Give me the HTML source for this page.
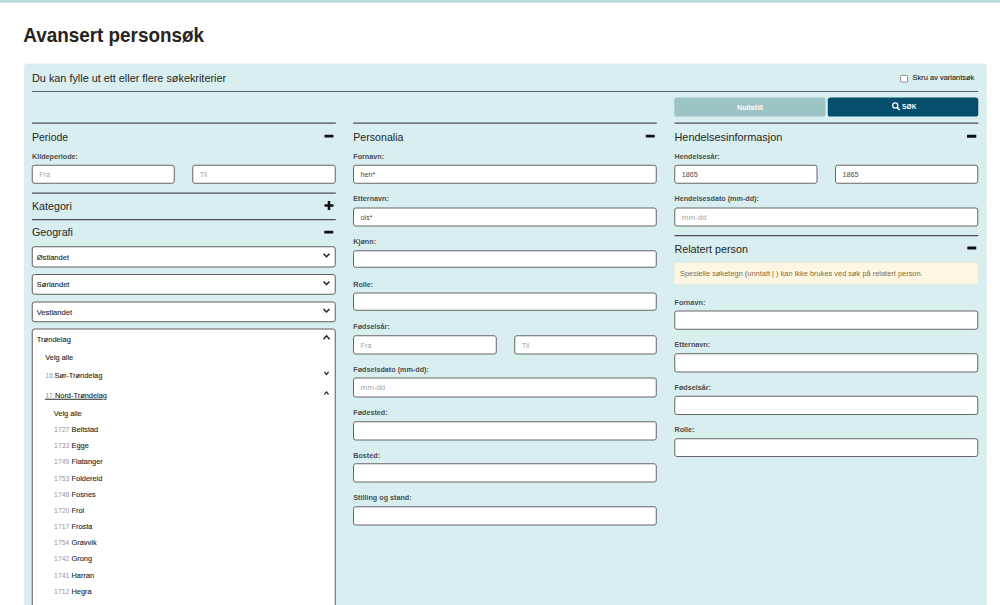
<!DOCTYPE html>
<html lang="no"><head><meta charset="utf-8"><title>Avansert personsøk</title>
<style>
html,body{margin:0;padding:0;background:#fff;overflow:hidden}
#vp{position:relative;width:1000px;height:605px;overflow:hidden;background:#fff}
#pg{position:absolute;left:0;top:0;width:4000px;height:2420px;transform:scale(0.25);transform-origin:0 0;font-family:"Liberation Sans",sans-serif}
.b{position:absolute;box-sizing:border-box}
.t{position:absolute;white-space:nowrap;line-height:1;color:#333}
.title{font-weight:700;color:#262321;letter-spacing:0}
.panel{background:#d9eeee;border-radius:16px}
.h{color:#262626}
.l{font-weight:700;color:#4e4e4e}
.dk{color:#1e1e1e;-webkit-text-stroke:0.4px #1e1e1e}
.t.n{color:#969696}
.w{color:#fff;font-weight:700}
.val{color:#484848}
.ph{color:#a6a6a6}
.hr{background:#4d4d4d}
.ic{background:#111;border-radius:1.2px}
.in{background:#fff;border:4.0px solid #666;border-radius:10.4px}
.sel{background:#fff;border:4.0px solid #5e5e5e;border-radius:11.2px}
.cb{background:#fff;border:3.2px solid #6a6a6a;border-radius:5.2px}
.btn{border-radius:10.4px}
.alert{background:#fcf6e2;border:2.4px solid #f8ebcb;border-radius:8px}
</style></head>
<body><div id="vp"><div id="pg">
<div class="b " style="left:0px;top:0px;width:4000px;height:11px;background:#bcdcdc"></div>
<div class="t title" style="left:93.2px;transform:scaleX(0.925);transform-origin:0 0;top:97.33px;font-size:81.6px;">Avansert personsøk</div>
<div class="b panel" style="left:96px;top:254px;width:3851px;height:2306px;"></div>
<div class="t h" style="left:128px;transform:scaleX(0.96);transform-origin:0 0;top:290.74px;font-size:45.2px;">Du kan fylle ut ett eller flere søkekriterier</div>
<div class="b cb" style="left:3601px;top:300px;width:31px;height:30.4px;"></div>
<div class="t dk" style="left:3650.4px;top:295.77px;font-size:29.8px;">Skru av variantsøk</div>
<div class="b " style="left:128px;top:364px;width:3785px;height:4px;background:#585c5c"></div>
<div class="b btn" style="left:2697px;top:390px;width:605px;height:75.6px;background:#9cc4c4"></div>
<div class="t w" style="left:3000px;transform:translateX(-50%);top:414.42px;font-size:28.8px;">Nullstill</div>
<div class="b btn" style="left:3311px;top:390px;width:602px;height:75.6px;background:#064e6e"></div>
<div class="t w" style="left:3608.4px;top:414.45px;font-size:26.4px;">SØK</div>
<svg class="b" style="left:3564px;top:404px" width="40" height="40" viewBox="0 0 100 100"><circle cx="42.5" cy="45" r="25.5" fill="none" stroke="#fff" stroke-width="12.5"/><line x1="64" y1="66" x2="84" y2="87" stroke="#fff" stroke-width="16" stroke-linecap="round"/></svg>
<div class="b hr" style="left:128px;top:489.6px;width:1215px;height:5.2px;"></div>
<div class="b hr" style="left:1413px;top:489.6px;width:1214px;height:5.2px;"></div>
<div class="b hr" style="left:2698px;top:489.6px;width:1215px;height:5.2px;"></div>
<div class="t h" style="left:128px;transform:scaleX(0.93);transform-origin:0 0;top:524.74px;font-size:45.2px;">Periode</div>
<div class="t h" style="left:1413px;transform:scaleX(0.94);transform-origin:0 0;top:524.74px;font-size:45.2px;">Personalia</div>
<div class="t h" style="left:2697.6px;transform:scaleX(0.965);transform-origin:0 0;top:524.74px;font-size:45.2px;">Hendelsesinformasjon</div>
<div class="b ic" style="left:1297.6px;top:539px;width:36px;height:11.2px;"></div>
<div class="b ic" style="left:2583px;top:539px;width:36px;height:11.2px;"></div>
<div class="b ic" style="left:3868.4px;top:539.2px;width:36.4px;height:11.6px;"></div>
<div class="t l" style="left:128px;top:610.62px;font-size:28.8px;">Kildeperiode:</div>
<div class="b in" style="left:127px;top:659px;width:572px;height:76px;"></div>
<div class="t ph" style="left:157.4px;top:683.82px;font-size:28.8px;">Fra</div>
<div class="b in" style="left:769px;top:659px;width:574px;height:76px;"></div>
<div class="t ph" style="left:799.4px;top:683.82px;font-size:28.8px;">Til</div>
<div class="b hr" style="left:128px;top:769.8px;width:1215px;height:5.2px;"></div>
<div class="t h" style="left:128px;transform:scaleX(0.945);transform-origin:0 0;top:800.74px;font-size:45.2px;">Kategori</div>
<div class="b ic" style="left:1298px;top:816.8px;width:36px;height:10.4px;"></div>
<div class="b ic" style="left:1310.8px;top:804px;width:10.4px;height:36px;"></div>
<div class="b hr" style="left:128px;top:876.2px;width:1215px;height:5.2px;"></div>
<div class="t h" style="left:128px;transform:scaleX(0.945);transform-origin:0 0;top:906.74px;font-size:45.2px;">Geografi</div>
<div class="b ic" style="left:1297.2px;top:923px;width:35.6px;height:11.4px;"></div>
<div class="b sel" style="left:127px;top:985.4px;width:1216px;height:84.6px;"></div>
<div class="t dk" style="left:147px;top:1012.84px;font-size:30.2px;">Østlandet</div>
<svg class="b" style="left:1292px;top:1013.4px;overflow:visible" width="28" height="16.000000000000114" viewBox="0 0 28 16.000000000000114"><polyline points="2.0999999999999996,2.0999999999999996 14.0,13.900000000000114 25.9,2.0999999999999996" fill="none" stroke="#222" stroke-width="6.0" stroke-linecap="butt" stroke-linejoin="miter"/></svg>
<div class="b sel" style="left:127px;top:1096px;width:1216px;height:83px;"></div>
<div class="t dk" style="left:147px;top:1123.44px;font-size:30.2px;">Sørlandet</div>
<svg class="b" style="left:1292px;top:1124px;overflow:visible" width="28" height="16.0" viewBox="0 0 28 16.0"><polyline points="2.0999999999999996,2.0999999999999996 14.0,13.9 25.9,2.0999999999999996" fill="none" stroke="#222" stroke-width="6.0" stroke-linecap="butt" stroke-linejoin="miter"/></svg>
<div class="b sel" style="left:127px;top:1206px;width:1216px;height:83px;"></div>
<div class="t dk" style="left:147px;top:1233.44px;font-size:30.2px;">Vestlandet</div>
<svg class="b" style="left:1292px;top:1234px;overflow:visible" width="28" height="16.0" viewBox="0 0 28 16.0"><polyline points="2.0999999999999996,2.0999999999999996 14.0,13.9 25.9,2.0999999999999996" fill="none" stroke="#222" stroke-width="6.0" stroke-linecap="butt" stroke-linejoin="miter"/></svg>
<div class="b sel" style="left:127px;top:1314px;width:1216px;height:1246px;"></div>
<div class="t dk" style="left:147px;top:1342.44px;font-size:30.2px;">Trøndelag</div>
<svg class="b" style="left:1291.6px;top:1341.2px;overflow:visible" width="28.40000000000009" height="18.0" viewBox="0 0 28.40000000000009 18.0"><polyline points="2.0999999999999996,15.9 14.200000000000045,2.0999999999999996 26.30000000000009,15.9" fill="none" stroke="#222" stroke-width="6.0" stroke-linecap="butt" stroke-linejoin="miter"/></svg>
<div class="t dk" style="left:181px;top:1412.94px;font-size:29.6px;">Velg alle</div>
<div class="t n" style="left:182px;top:1489.31px;font-size:26.8px;">16</div>
<div class="t dk" style="left:217.8px;top:1486.94px;font-size:29.6px;">Sør-Trøndelag</div>
<svg class="b" style="left:1296px;top:1485.6px;overflow:visible" width="20" height="13.600000000000136" viewBox="0 0 20 13.600000000000136"><polyline points="1.68,1.68 10.0,11.920000000000137 18.32,1.68" fill="none" stroke="#222" stroke-width="4.8" stroke-linecap="butt" stroke-linejoin="miter"/></svg>
<div class="t n" style="left:181.6px;top:1569.65px;font-size:26.4px;">17</div>
<div class="t dk" style="left:219.6px;top:1566.88px;font-size:29.68px;">Nord-Trøndelag</div>
<div class="b " style="left:180.4px;top:1594.6px;width:230.8px;height:4px;background:#2a2a2a"></div>
<svg class="b" style="left:1296px;top:1566.4px;overflow:visible" width="20" height="13.199999999999818" viewBox="0 0 20 13.199999999999818"><polyline points="1.68,11.519999999999818 10.0,1.68 18.32,11.519999999999818" fill="none" stroke="#222" stroke-width="4.8" stroke-linecap="butt" stroke-linejoin="miter"/></svg>
<div class="t dk" style="left:215px;top:1638.14px;font-size:29.6px;">Velg alle</div>
<div class="t n" style="left:216.4px;top:1704.98px;font-size:27.2px;">1727</div>
<div class="t dk" style="left:286px;top:1702.94px;font-size:29.6px;">Beitstad</div>
<div class="t n" style="left:216.4px;top:1769.62px;font-size:27.2px;">1733</div>
<div class="t dk" style="left:286px;top:1767.58px;font-size:29.6px;">Egge</div>
<div class="t n" style="left:216.4px;top:1834.26px;font-size:27.2px;">1749</div>
<div class="t dk" style="left:286px;top:1832.22px;font-size:29.6px;">Flatanger</div>
<div class="t n" style="left:216.4px;top:1898.9px;font-size:27.2px;">1753</div>
<div class="t dk" style="left:286px;top:1896.86px;font-size:29.6px;">Foldereid</div>
<div class="t n" style="left:216.4px;top:1963.54px;font-size:27.2px;">1748</div>
<div class="t dk" style="left:286px;top:1961.5px;font-size:29.6px;">Fosnes</div>
<div class="t n" style="left:216.4px;top:2028.18px;font-size:27.2px;">1720</div>
<div class="t dk" style="left:286px;top:2026.14px;font-size:29.6px;">Frol</div>
<div class="t n" style="left:216.4px;top:2092.82px;font-size:27.2px;">1717</div>
<div class="t dk" style="left:286px;top:2090.78px;font-size:29.6px;">Frosta</div>
<div class="t n" style="left:216.4px;top:2157.46px;font-size:27.2px;">1754</div>
<div class="t dk" style="left:286px;top:2155.42px;font-size:29.6px;">Gravvik</div>
<div class="t n" style="left:216.4px;top:2222.1px;font-size:27.2px;">1742</div>
<div class="t dk" style="left:286px;top:2220.06px;font-size:29.6px;">Grong</div>
<div class="t n" style="left:216.4px;top:2286.74px;font-size:27.2px;">1741</div>
<div class="t dk" style="left:286px;top:2284.7px;font-size:29.6px;">Harran</div>
<div class="t n" style="left:216.4px;top:2351.38px;font-size:27.2px;">1712</div>
<div class="t dk" style="left:286px;top:2349.34px;font-size:29.6px;">Hegra</div>
<div class="t n" style="left:216.4px;top:2416.02px;font-size:27.2px;">1743</div>
<div class="t dk" style="left:286px;top:2413.98px;font-size:29.6px;">Høylandet</div>
<div class="t l" style="left:1413px;top:610.62px;font-size:28.8px;">Fornavn:</div>
<div class="b in" style="left:1412px;top:659px;width:1215px;height:76px;"></div>
<div class="t val" style="left:1442.4px;top:683.82px;font-size:28.8px;">hen*</div>
<div class="t l" style="left:1413px;top:780.62px;font-size:28.8px;">Etternavn:</div>
<div class="b in" style="left:1412px;top:830px;width:1215px;height:76px;"></div>
<div class="t val" style="left:1442.4px;top:854.82px;font-size:28.8px;">ols*</div>
<div class="t l" style="left:1413px;top:951.62px;font-size:28.8px;">Kjønn:</div>
<div class="b in" style="left:1412px;top:1001px;width:1215px;height:70px;"></div>
<div class="t l" style="left:1413px;top:1121.62px;font-size:28.8px;">Rolle:</div>
<div class="b in" style="left:1412px;top:1170px;width:1215px;height:73px;"></div>
<div class="t l" style="left:1413px;top:1291.62px;font-size:28.8px;">Fødselsår:</div>
<div class="b in" style="left:1412px;top:1341px;width:575px;height:77px;"></div>
<div class="t ph" style="left:1442.4px;top:1365.82px;font-size:28.8px;">Fra</div>
<div class="b in" style="left:2057px;top:1341px;width:570px;height:77px;"></div>
<div class="t ph" style="left:2087.4px;top:1365.82px;font-size:28.8px;">Til</div>
<div class="t l" style="left:1413px;top:1462.82px;font-size:28.8px;">Fødselsdato (mm-dd):</div>
<div class="b in" style="left:1412px;top:1510px;width:1215px;height:80px;"></div>
<div class="t ph" style="left:1442.4px;top:1532.45px;font-size:31.6px;">mm-dd</div>
<div class="t l" style="left:1413px;top:1634.62px;font-size:28.8px;">Fødested:</div>
<div class="b in" style="left:1412px;top:1685px;width:1215px;height:77px;"></div>
<div class="t l" style="left:1413px;top:1805.62px;font-size:28.8px;">Bosted:</div>
<div class="b in" style="left:1412px;top:1853px;width:1215px;height:77px;"></div>
<div class="t l" style="left:1413px;top:1975.62px;font-size:28.8px;">Stilling og stand:</div>
<div class="b in" style="left:1412px;top:2025px;width:1215px;height:77px;"></div>
<div class="t l" style="left:2698px;top:610.62px;font-size:28.8px;">Hendelsesår:</div>
<div class="b in" style="left:2697px;top:659px;width:573px;height:76px;"></div>
<div class="t val" style="left:2727.4px;top:683.82px;font-size:28.8px;">1865</div>
<div class="b in" style="left:3340px;top:659px;width:573px;height:76px;"></div>
<div class="t val" style="left:3370.4px;top:683.82px;font-size:28.8px;">1865</div>
<div class="t l" style="left:2698px;top:780.62px;font-size:28.8px;">Hendelsesdato (mm-dd):</div>
<div class="b in" style="left:2697px;top:830px;width:1216px;height:76.4px;"></div>
<div class="t ph" style="left:2727.4px;top:852.45px;font-size:31.6px;">mm-dd</div>
<div class="b hr" style="left:2698px;top:939.8px;width:1215px;height:5.2px;"></div>
<div class="t h" style="left:2697.6px;transform:scaleX(0.95);transform-origin:0 0;top:971.74px;font-size:45.2px;">Relatert person</div>
<div class="b ic" style="left:3868.8px;top:986px;width:36.4px;height:12px;"></div>
<div class="b alert" style="left:2697px;top:1050px;width:1216px;height:87px;"></div>
<div class="t " style="left:2720px;top:1078.84px;font-size:29.72px;color:#8a6d3b">Spesielle søketegn (unntatt | ) kan ikke brukes ved søk på relatert person.</div>
<div class="t l" style="left:2698px;top:1193.62px;font-size:28.8px;">Fornavn:</div>
<div class="b in" style="left:2697px;top:1242px;width:1216px;height:77px;"></div>
<div class="t l" style="left:2698px;top:1363.62px;font-size:28.8px;">Etternavn:</div>
<div class="b in" style="left:2697px;top:1413px;width:1216px;height:77px;"></div>
<div class="t l" style="left:2698px;top:1534.42px;font-size:28.8px;">Fødselsår:</div>
<div class="b in" style="left:2697px;top:1583px;width:1216px;height:77px;"></div>
<div class="t l" style="left:2698px;top:1705.22px;font-size:28.8px;">Rolle:</div>
<div class="b in" style="left:2697px;top:1753px;width:1216px;height:75px;"></div>
</div></div></body></html>
